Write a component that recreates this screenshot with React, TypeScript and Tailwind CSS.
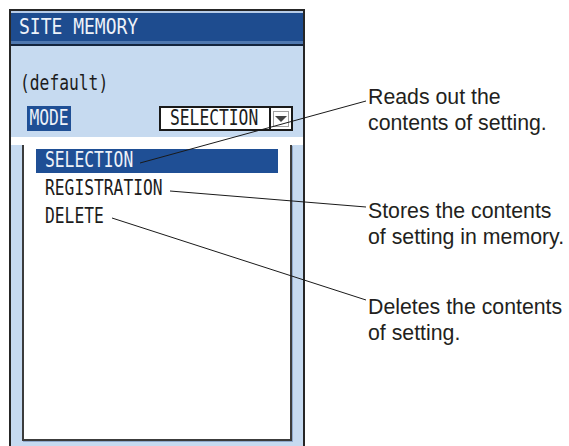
const mono = "font-['DejaVu_Sans_Mono','Liberation_Mono',monospace]";

const items = ["SELECTION", "REGISTRATION", "DELETE"];

const callouts = [
  { lines: ["Reads out the", "contents of setting."], gap: "mt-0" },
  { lines: ["Stores the contents", "of setting in memory."], gap: "mt-[62px]" },
  { lines: ["Deletes the contents", "of setting."], gap: "mt-[44px]" },
];

function Lcd({ text, className = "" }: { text: string; className?: string }) {
  return (
    <span className={`inline-block scale-y-[1.27] whitespace-pre ${mono} text-[16.3px] leading-[20px] ${className}`}>
      {text}
    </span>
  );
}

export default function App() {
  return (
    <div className="relative flex h-[446px] w-[569px] overflow-hidden bg-white">
      {/* screen panel */}
      <div className="ml-[9px] mt-[9px] flex h-[437px] w-[296px] shrink-0 flex-col border-2 border-b-0 border-[#262626] bg-[#c6daf0]">
        {/* title bar */}
        <div className="flex flex-col">
          <div className="h-[2px] bg-[#b7cce8]" />
          <div className="flex h-[28px] items-center bg-[#1e4c8f] pl-[8px]">
            <span className={`inline-block scale-y-[1.15] ${mono} text-[18px] leading-[20px] text-[#eef2f9]`}>
              SITE MEMORY
            </span>
          </div>
          <div className="h-[3px] bg-[#4f78b0]" />
          <div className="h-[2px] bg-[#13243d]" />
        </div>

        {/* settings */}
        <div className="flex h-[91px] flex-col">
          <div className="mt-[28px] flex h-[20px] items-center pl-[9px]">
            <Lcd text="(default)" className="text-[#1c1c1c]" />
          </div>
          <div className="mt-[12px] flex h-[25px] items-center justify-between pl-[16px] pr-[10px]">
            <div className="flex h-[25px] w-[44px] items-center justify-center bg-[#1f4f95]">
              <Lcd text="MODE" className="text-[#eef2f9]" />
            </div>
            <div className="flex h-[25px] w-[134px] border-2 border-[#1a1a1a] bg-white">
              <div className="flex flex-1 items-center pl-[9px]">
                <Lcd text="SELECTION" className="text-[#1c1c1c]" />
              </div>
              <div className="flex w-[22px] items-center justify-center border-l-2 border-[#1a1a1a]">
                <div className="flex h-[16px] w-[16px] items-center justify-center border border-[#a0a0a0]">
                  <svg width="12" height="6" viewBox="0 0 12 6">
                    <path d="M0 0 L12 0 L6 6 Z" fill="#444" />
                  </svg>
                </div>
              </div>
            </div>
          </div>
        </div>

        <div className="h-[8px] bg-white" />

        {/* list box */}
        <div className="flex flex-1 px-[11px] pb-[5px]">
          <div className="flex flex-1 flex-col border-x-2 border-b-2 border-[#3c3c3c] bg-white px-[12px] pt-[4px] shadow-[1px_1px_0_#8fa9cc]">
            <div className="flex flex-col gap-[4px]">
              {items.map((item, i) => (
                <div
                  key={item}
                  className={`flex h-[24px] items-center pl-[9px] ${i === 0 ? "bg-[#1f4f95]" : ""}`}
                >
                  <Lcd text={item} className={i === 0 ? "text-[#eef2f9]" : "text-[#1c1c1c]"} />
                </div>
              ))}
            </div>
          </div>
        </div>
      </div>

      {/* callout texts */}
      <div className="ml-[63px] flex flex-col pt-[84px] font-['Liberation_Sans',Arial,sans-serif] text-[21.3px] leading-[26px] text-[#231f20]">
        {callouts.map((c) => (
          <div key={c.lines[0]} className={`${c.gap} whitespace-nowrap`}>
            {c.lines.map((l) => (
              <div key={l}>{l}</div>
            ))}
          </div>
        ))}
      </div>

      {/* leader lines */}
      <svg className="pointer-events-none absolute inset-0" width="569" height="446">
        <g stroke="#1a1a1a" strokeWidth="1" fill="none">
          <line x1="140" y1="163" x2="366" y2="101" />
          <line x1="170" y1="191" x2="366" y2="207" />
          <line x1="112" y1="218" x2="366" y2="300" />
        </g>
      </svg>
    </div>
  );
}
